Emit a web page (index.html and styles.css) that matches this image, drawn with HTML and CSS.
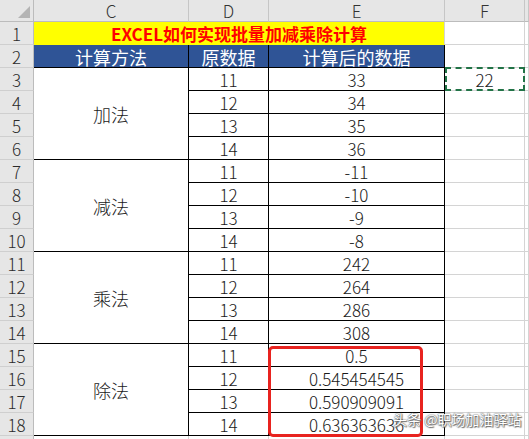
FILE: index.html
```html
<!DOCTYPE html>
<html lang="zh-CN">
<head>
<meta charset="utf-8">
<title>EXCEL如何实现批量加减乘除计算</title>
<link rel="stylesheet" href="styles.css">
</head>
<body>
<div class="sheet">
  <div class="grid">
    <div class="corner"><span class="tri"></span></div>
    <div class="ch">C</div><div class="ch">D</div><div class="ch">E</div><div class="ch">F</div><div class="ch"></div>

    <div class="rh">1</div><div class="title">EXCEL如何实现批量加减乘除计算</div><div class="c"></div><div class="c"></div>
    <div class="rh">2</div><div class="th">计算方法</div><div class="th">原数据</div><div class="th">计算后的数据</div><div class="c"></div><div class="c"></div>

    <div class="rh">3</div><div class="m">加法</div><div class="t">11</div><div class="t">33</div><div class="c copy">22</div><div class="c"></div>
    <div class="rh">4</div><div class="t">12</div><div class="t">34</div><div class="c"></div><div class="c"></div>
    <div class="rh">5</div><div class="t">13</div><div class="t">35</div><div class="c"></div><div class="c"></div>
    <div class="rh">6</div><div class="t">14</div><div class="t">36</div><div class="c"></div><div class="c"></div>

    <div class="rh">7</div><div class="m">减法</div><div class="t">11</div><div class="t">-11</div><div class="c"></div><div class="c"></div>
    <div class="rh">8</div><div class="t">12</div><div class="t">-10</div><div class="c"></div><div class="c"></div>
    <div class="rh">9</div><div class="t">13</div><div class="t">-9</div><div class="c"></div><div class="c"></div>
    <div class="rh">10</div><div class="t">14</div><div class="t">-8</div><div class="c"></div><div class="c"></div>

    <div class="rh">11</div><div class="m">乘法</div><div class="t">11</div><div class="t">242</div><div class="c"></div><div class="c"></div>
    <div class="rh">12</div><div class="t">12</div><div class="t">264</div><div class="c"></div><div class="c"></div>
    <div class="rh">13</div><div class="t">13</div><div class="t">286</div><div class="c"></div><div class="c"></div>
    <div class="rh">14</div><div class="t">14</div><div class="t">308</div><div class="c"></div><div class="c"></div>

    <div class="rh">15</div><div class="m">除法</div><div class="t">11</div><div class="t">0.5</div><div class="c"></div><div class="c"></div>
    <div class="rh">16</div><div class="t">12</div><div class="t">0.545454545</div><div class="c"></div><div class="c"></div>
    <div class="rh">17</div><div class="t">13</div><div class="t">0.590909091</div><div class="c"></div><div class="c"></div>
    <div class="rh">18</div><div class="t">14</div><div class="t">0.636363636</div><div class="c"></div><div class="c"></div>

    <div class="rh">19</div><div class="c"></div><div class="c"></div><div class="c"></div><div class="c"></div><div class="c"></div>
  </div>
  <div class="highlight"></div>
  <div class="watermark">头条 @职场加油驿站</div>
</div>
</body>
</html>
```

FILE: styles.css
```css
* { box-sizing: border-box; }
html, body {
  margin: 0;
  padding: 0;
  background: #ffffff;
  overflow: hidden;
}
.sheet {
  position: relative;
  width: 529px;
  height: 439px;
  overflow: hidden;
  font-family: "Noto Sans CJK SC", "Noto Sans", sans-serif;
  color: #111;
}
.grid {
  display: grid;
  grid-template-columns: 34px 155px 80px 176px 80px 1fr;
  grid-template-rows: 22px repeat(19, 23px);
}
.grid > div {
  display: flex;
  align-items: center;
  justify-content: center;
  padding-top: 1px;
  border-right: 1px solid #d4d4d4;
  border-bottom: 1px solid #d4d4d4;
  font-size: 17px;
  font-weight: 300;
  line-height: 20px;
  white-space: nowrap;
}
.corner {
  position: relative;
  background: #e6e6e6;
  border-right-color: #bcbcbc !important;
  border-bottom-color: #bcbcbc !important;
}
.tri {
  position: absolute;
  right: 3px;
  bottom: 3px;
  width: 0;
  height: 0;
  border-left: 12px solid transparent;
  border-bottom: 12px solid #b4b4b4;
}
.ch {
  background: #e6e6e6;
  color: #333;
  border-right-color: #c6c6c6 !important;
  border-bottom-color: #bcbcbc !important;
}
.rh {
  background: #e6e6e6;
  color: #2b2b2b;
  border-right-color: #bcbcbc !important;
  border-bottom-color: #cfcfcf !important;
}
.title {
  grid-column: span 3;
  background: #ffff00;
  color: #ff0000;
  font-weight: bold !important;
  border-bottom-color: #ffff00 !important;
}
.th {
  background: #2f5496;
  color: #ffffff;
  font-size: 18px !important;
  font-weight: 400 !important;
  border-right-color: #000 !important;
  border-bottom-color: #000 !important;
}
.t {
  padding-top: 2px !important;
  border-right-color: #000 !important;
  border-bottom-color: #000 !important;
  color: #1a1a1a;
}
.m {
  grid-row: span 4;
  border-right-color: #000 !important;
  border-bottom-color: #000 !important;
  font-size: 18px !important;
  color: #1a1a1a;
}
.copy {
  position: relative;
  padding-top: 2px !important;
  color: #1a1a1a;
}
.copy::after {
  content: "";
  position: absolute;
  left: 0;
  top: -1px;
  right: -1px;
  bottom: -1px;
  border: 2px dashed #217346;
}
.highlight {
  position: absolute;
  left: 268px;
  top: 346px;
  width: 155px;
  height: 91px;
  border: 3px solid #e8231f;
  border-radius: 5px;
}
.watermark {
  position: absolute;
  left: 393px;
  top: 410px;
  font-size: 14px;
  line-height: 18px;
  color: #ffffff;
  text-shadow: 0 0 1px #555, 0 0 2px #666, 1px 1px 1px #777;
  white-space: nowrap;
}
```
